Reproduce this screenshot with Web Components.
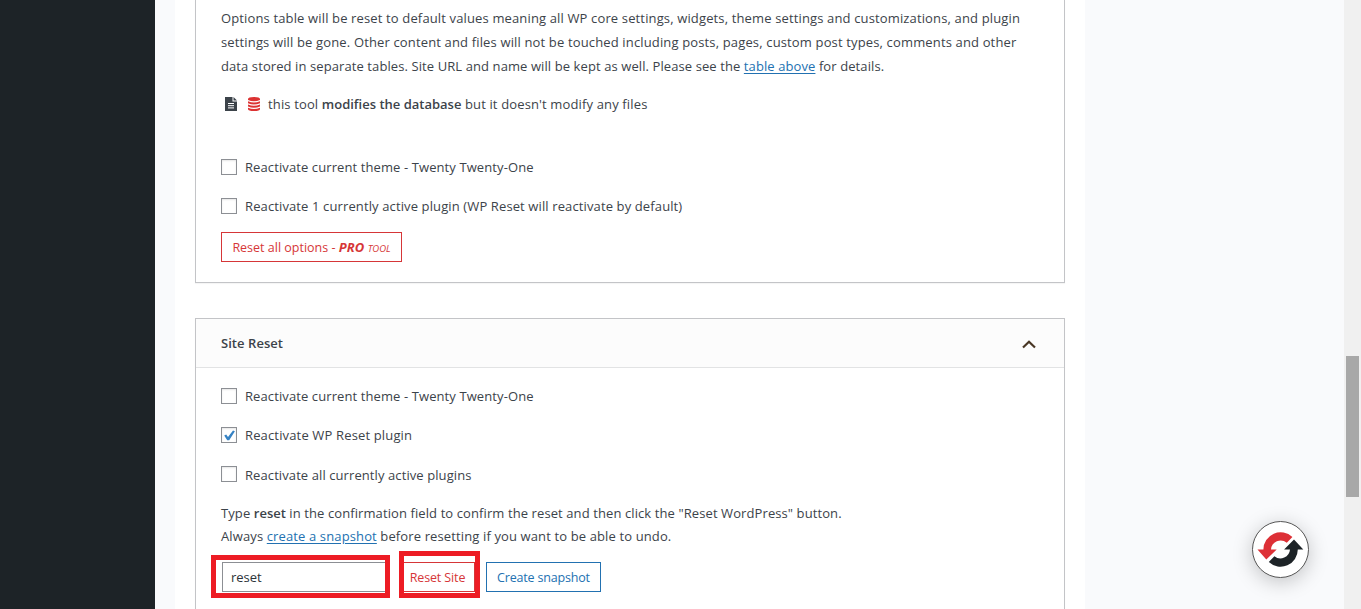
<!DOCTYPE html>
<html lang="en">
<head>
<meta charset="utf-8">
<title>WP Reset</title>
<style>
body{
  margin:0;
  height:100vh;
  overflow:hidden;
  color:#3c434a;
  font-family:"Open Sans","Noto Sans",sans-serif;
  font-size:13px;
}
</style>
</head>
<body>
<reset-page></reset-page>
<script>
function setShadow(el, html){
  el.attachShadow({mode:'open'}).innerHTML = html;
}

// one line of text, "track" is its letter spacing
customElements.define('text-line', class extends HTMLElement {
  connectedCallback(){
    setShadow(this, `
      <style>
      :host{ display:block; white-space:nowrap; line-height:24px; }
      span{ letter-spacing:${this.getAttribute("track") || 0}px; }
      </style>
      <span><slot></slot></span>
    `);
  }
});

customElements.define('reset-card', class extends HTMLElement {
  connectedCallback(){
    const title = this.getAttribute("title-text");
    setShadow(this, `
      <style>
      :host{
        display:block;
        box-sizing:border-box;
        width:870px;
        border:1px solid #c3c4c7;
        background:#fff;
        box-shadow:0 1px 1px rgba(0,0,0,.04);
      }
      header{
        display:flex;
        align-items:center;
        justify-content:space-between;
        height:48px;
        padding:0 28px 0 25px;
        background:#fcfcfc;
        border-bottom:1px solid #e2e3e4;
        font-weight:600;
      }
      svg{ margin-top:2px; }
      .body{ padding:0 25px; }
      </style>
      ${title ? `<header>
        <text-line track="0.05">${title}</text-line>
        <svg width="14" height="10" viewBox="0 0 14 10"><path d="M1 8.5 7 2.7l6 5.8" fill="none" stroke="#493725" stroke-width="2.2"/></svg>
      </header>` : ''}
      <div class="body"><slot></slot></div>
    `);
  }
});

customElements.define('check-row', class extends HTMLElement {
  connectedCallback(){
    setShadow(this, `
      <style>
      :host{ display:flex; align-items:center; gap:8px; height:24px; }
      i{
        display:block;
        box-sizing:border-box;
        width:16px;
        height:16px;
        border:1px solid #8c8f94;
        background:#fff;
        box-shadow:inset 0 1px 2px rgba(0,0,0,.1);
      }
      svg{ display:block; }
      :host([low]) text-line{ padding-top:2px; }
      </style>
      <i>${this.hasAttribute("checked") ? '<svg width="14" height="14" viewBox="0 0 14 14"><path d="M2.2 7.4 4.2 6.5 6 8.9 11 2.6 12.9 3.2 7.2 12.2 5.2 12.3Z" fill="#3582c4"/></svg>' : ''}</i>
      <text-line track="${this.getAttribute("track") || 0}"><slot></slot></text-line>
    `);
  }
});

customElements.define('wp-button', class extends HTMLElement {
  connectedCallback(){
    setShadow(this, `
      <style>
      :host{ display:block; color:#2271b1; }
      :host([kind=red]){ color:#d63638; }
      button{
        display:flex;
        align-items:center;
        justify-content:center;
        box-sizing:border-box;
        width:${this.getAttribute("width")}px;
        height:30px;
        padding:2px 0 0;
        border:1px solid currentColor;
        background:#fff;
        color:inherit;
        font:inherit;
        font-size:12.5px;
      }
      </style>
      <button><text-line track="${this.getAttribute("track") || 0}"><slot></slot></text-line></button>
    `);
  }
});

// thick red frame drawn over a control
customElements.define('red-frame', class extends HTMLElement {
  connectedCallback(){
    setShadow(this, `
      <style>
      :host{ display:block; position:relative; }
      :host::after{
        content:"";
        position:absolute;
        inset:var(--frame);
        border:5px solid #ed1c24;
      }
      </style>
      <slot></slot>
    `);
  }
});

customElements.define('help-bubble', class extends HTMLElement {
  connectedCallback(){
    setShadow(this, `
      <style>
      :host{
        position:fixed;
        left:1252px;
        top:521px;
        box-sizing:border-box;
        width:57px;
        height:57px;
        border:1px solid #555;
        border-radius:50%;
        background:#fff;
        box-shadow:0 4px 20px rgba(0,0,0,.22);
      }
      svg{ display:block; }
      </style>
      <svg width="55" height="55" viewBox="1253 522 55 55">
        <path d="M1257.5 549.5H1263.4A17.2 17.2 0 0 1 1292.4 537L1286.8 542.8A9.6 9.6 0 0 0 1271 549.5H1276.7L1266.3 559.6Z" fill="#dd3036"/>
        <path d="M1303.3 549.5H1297.8A17.2 17.2 0 0 1 1268.8 562L1274.4 556.2A9.6 9.6 0 0 0 1290 549.5H1284.1L1294 539.4Z" fill="#1d2327"/>
      </svg>
    `);
  }
});

customElements.define('reset-page', class extends HTMLElement {
  connectedCallback(){
    setShadow(this, `
      <style>
      :host{ display:flex; height:100vh; background:#f9fafc; }
      .menu{ flex:none; width:155px; background:#1d2327; }
      main{
        flex:none;
        box-sizing:border-box;
        width:910px;
        margin-left:20px;
        padding:0 20px;
        background:#fff;
        overflow:hidden;
      }
      .scroll{
        display:flex;
        flex-direction:column;
        align-items:center;
        width:17px;
        margin-left:auto;
        background:#f0f0f0;
      }
      .thumb{ width:13px; height:141px; margin-top:356px; background:#a8a8a8; }
      a{ color:#2271b1; text-decoration:underline; text-underline-offset:2px; }
      b{ font-weight:600; letter-spacing:0; }
      .first{ height:283px; border-top:0; margin-bottom:35px; }
      .intro{ padding-top:6px; }
      .note{ display:flex; align-items:center; height:24px; margin-top:14px; padding-left:4px; }
      .note text-line{ margin-left:8px; }
      .note svg + svg{ margin-left:11px; }
      .checks{ display:flex; flex-direction:column; gap:15px; }
      .first .checks{ margin:39px 0 14px; }
      .second .checks{ margin:16px 0 16px; }
      .second{ height:330px; }
      .confirm text-line{ line-height:23px; }
      .form{ display:flex; align-items:center; margin:14px 0 0 1px; }
      input{
        display:block;
        box-sizing:border-box;
        width:165px;
        height:30px;
        padding:0 8px;
        border:1px solid #8c8f94;
        background:#fff;
        color:#2c3338;
        font:inherit;
      }
      .reset{ margin-left:13px; --frame:-11px -5px -6px -1px; }
      .field{ --frame:-7px -3px -6px -11px; }
      .snap{ margin-left:11px; }
      small{ font-size:9.5px; font-style:italic; line-height:0; }
      strong{ font-size:13px; font-weight:700; font-style:italic; line-height:0; letter-spacing:.1px; }
      </style>
      <div class="menu"></div>
      <main>
        <reset-card class="first">
          <div class="intro">
            <text-line track="0.14">Options table will be reset to default values meaning all WP core settings, widgets, theme settings and customizations, and plugin</text-line>
            <text-line track="0.147">settings will be gone. Other content and files will not be touched including posts, pages, custom post types, comments and other</text-line>
            <text-line track="0.092">data stored in separate tables. Site URL and name will be kept as well. Please see the <a>table above</a> for details.</text-line>
          </div>
          <div class="note">
            <svg width="12" height="14" viewBox="0 0 12 14"><path d="M0 0H7.5V4.5H12V14H0Z" fill="#3c434a"/><path d="M8.5 0 12 3.5H8.5Z" fill="#3c434a"/><path d="M3 6.5H9M3 8.7H9M3 10.9H9" stroke="#fff"/></svg>
            <svg width="12" height="14" viewBox="0 0 12 14" fill="#dc3232"><path d="M0 2Q0 0 6 0T12 2V3Q6 5.4 0 3ZM0 4.2Q6 6.6 12 4.2V6.2Q6 8.8 0 6.2ZM0 7.5Q6 9.9 12 7.5V9.5Q6 12 0 9.5ZM0 10.7Q6 13.1 12 10.7V12Q12 14 6 14T0 12Z"/></svg>
            <text-line track="0.14">this tool <b>modifies the database</b> but it doesn't modify any files</text-line>
          </div>
          <div class="checks">
            <check-row track="0.1">Reactivate current theme - Twenty Twenty-One</check-row>
            <check-row track="0.12">Reactivate 1 currently active plugin (WP Reset will reactivate by default)</check-row>
          </div>
          <wp-button kind="red" width="181">Reset all options - <strong>PRO</strong> <small>TOOL</small></wp-button>
        </reset-card>
        <reset-card class="second" title-text="Site Reset">
          <div class="checks">
            <check-row track="0.1">Reactivate current theme - Twenty Twenty-One</check-row>
            <check-row track="0.15" checked>Reactivate WP Reset plugin</check-row>
            <check-row track="0.09" low>Reactivate all currently active plugins</check-row>
          </div>
          <div class="confirm">
            <text-line track="0.096">Type <b>reset</b> in the confirmation field to confirm the reset and then click the "Reset WordPress" button.</text-line>
            <text-line track="0.125">Always <a>create a snapshot</a> before resetting if you want to be able to undo.</text-line>
          </div>
          <div class="form">
            <red-frame class="field"><input value="reset"></red-frame>
            <red-frame class="reset"><wp-button kind="red" width="75" track="-0.12">Reset Site</wp-button></red-frame>
            <wp-button class="snap" width="115" track="-0.18">Create snapshot</wp-button>
          </div>
        </reset-card>
      </main>
      <div class="scroll"><div class="thumb"></div></div>
      <help-bubble></help-bubble>
    `);
  }
});
</script>
</body>
</html>
